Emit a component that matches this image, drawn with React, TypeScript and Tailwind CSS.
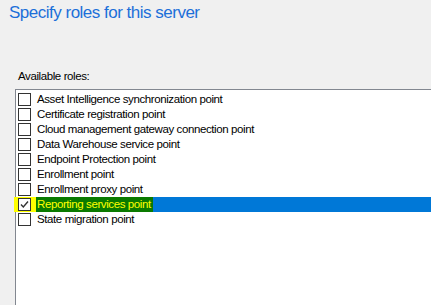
const roles = [
  "Asset Intelligence synchronization point",
  "Certificate registration point",
  "Cloud management gateway connection point",
  "Data Warehouse service point",
  "Endpoint Protection point",
  "Enrollment point",
  "Enrollment proxy point",
  "Reporting services point",
  "State migration point",
];

function CheckBox({ checked }: { checked?: boolean }) {
  return (
    <div className="w-[13px] h-[13px] border border-[#333333] bg-white flex items-center justify-center shrink-0">
      {checked && (
        <svg width="11" height="11" viewBox="0 0 11 11">
          <path d="M2 5.5 L4.3 8 L9 2.5" fill="none" stroke="#333" strokeWidth="1.4" />
        </svg>
      )}
    </div>
  );
}

export default function App() {
  return (
    <div
      className="w-[431px] h-[305px] bg-[#f0f0f0] overflow-hidden"
      style={{ fontFamily: '"Liberation Sans", Arial, sans-serif' }}
    >
      <div className="pl-[9px] pt-[2px] text-[17px] leading-[22px] tracking-[-0.5px] text-[#1c6fd9]">
        Specify roles for this server
      </div>
      <div className="pl-[18px] pt-[45px] text-[11.5px] leading-[14px] tracking-[-0.4px] text-black">
        Available roles:
      </div>
      <div className="ml-[15px] mt-[6px] h-[300px] bg-white border-l border-t border-[#828790] pt-[2px]">
        {roles.map((role, i) => {
          const sel = i === 7;
          return (
            <div
              key={role}
              className={`flex items-center h-[15px] text-[11.5px] tracking-[-0.4px] ${sel ? "bg-[#0078d7]" : ""}`}
            >
              <div className={`flex items-center h-full pl-[2px] pr-[5px] ${sel ? "bg-[#ffff00] -ml-[2px] pl-[4px]" : ""}`}>
                <CheckBox checked={sel} />
              </div>
              <div
                className={`h-full flex items-center pl-[1px] pr-[2px] ${sel ? "bg-[#0a7a00] text-[#ffff00]" : "text-black"}`}
              >
                {role}
              </div>
            </div>
          );
        })}
      </div>
    </div>
  );
}
